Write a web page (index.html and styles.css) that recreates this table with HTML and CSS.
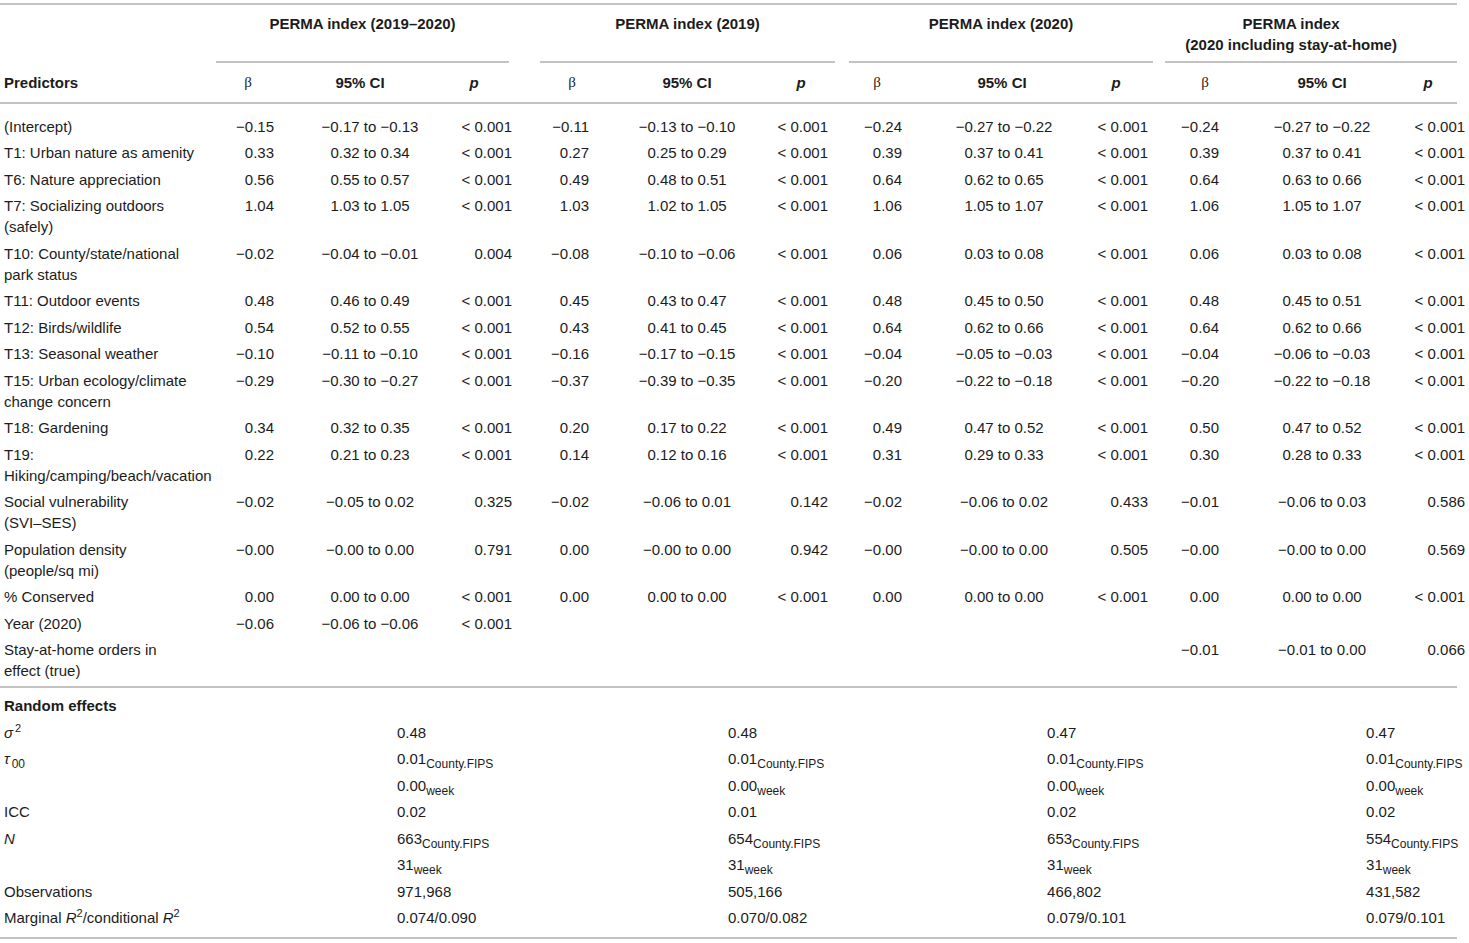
FILE: index.html
```html
<!DOCTYPE html>
<html lang="en">
<head>
<meta charset="utf-8">
<title>PERMA index models</title>
<link rel="stylesheet" href="styles.css">
</head>
<body>
<table class="tbl">
  <colgroup>
    <col class="w-pred">
    <col class="w-b1"><col class="w-c1"><col class="w-p1">
    <col class="w-b2"><col class="w-c2"><col class="w-p2">
    <col class="w-b3"><col class="w-c3"><col class="w-p3">
    <col class="w-b4"><col class="w-c4"><col class="w-p4">
  </colgroup>
  <thead>
    <tr class="r-group">
      <th class="pred"></th>
      <th colspan="3" class="grp"><div class="grp-in g1">PERMA index (2019–2020)</div></th>
      <th colspan="3" class="grp"><div class="grp-in g2">PERMA index (2019)</div></th>
      <th colspan="3" class="grp"><div class="grp-in g3">PERMA index (2020)</div></th>
      <th colspan="3" class="grp"><div class="grp-in g4">PERMA index<br>(2020 including stay-at-home)</div></th>
    </tr>
    <tr class="r-sub">
      <th class="pred">Predictors</th>
      <th class="hb hb1">β</th><th class="hc hc1">95% CI</th><th class="hp hp1">p</th>
      <th class="hb hb2">β</th><th class="hc">95% CI</th><th class="hp">p</th>
      <th class="hb hb3">β</th><th class="hc hc3">95% CI</th><th class="hp hp3">p</th>
      <th class="hb hb4">β</th><th class="hc">95% CI</th><th class="hp hp4">p</th>
    </tr>
  </thead>
  <tbody class="fixed">
    <tr class="first">
      <td class="pred">(Intercept)</td>
      <td class="b">−0.15</td><td class="ci">−0.17 to −0.13</td><td class="p">&lt; 0.001</td>
      <td class="b">−0.11</td><td class="ci">−0.13 to −0.10</td><td class="p">&lt; 0.001</td>
      <td class="b">−0.24</td><td class="ci">−0.27 to −0.22</td><td class="p">&lt; 0.001</td>
      <td class="b">−0.24</td><td class="ci">−0.27 to −0.22</td><td class="p"><span class="ov">&lt; 0.001</span></td>
    </tr>
    <tr>
      <td class="pred">T1: Urban nature as amenity</td>
      <td class="b">0.33</td><td class="ci">0.32 to 0.34</td><td class="p">&lt; 0.001</td>
      <td class="b">0.27</td><td class="ci">0.25 to 0.29</td><td class="p">&lt; 0.001</td>
      <td class="b">0.39</td><td class="ci">0.37 to 0.41</td><td class="p">&lt; 0.001</td>
      <td class="b">0.39</td><td class="ci">0.37 to 0.41</td><td class="p"><span class="ov">&lt; 0.001</span></td>
    </tr>
    <tr>
      <td class="pred">T6: Nature appreciation</td>
      <td class="b">0.56</td><td class="ci">0.55 to 0.57</td><td class="p">&lt; 0.001</td>
      <td class="b">0.49</td><td class="ci">0.48 to 0.51</td><td class="p">&lt; 0.001</td>
      <td class="b">0.64</td><td class="ci">0.62 to 0.65</td><td class="p">&lt; 0.001</td>
      <td class="b">0.64</td><td class="ci">0.63 to 0.66</td><td class="p"><span class="ov">&lt; 0.001</span></td>
    </tr>
    <tr>
      <td class="pred">T7: Socializing outdoors<br>(safely)</td>
      <td class="b">1.04</td><td class="ci">1.03 to 1.05</td><td class="p">&lt; 0.001</td>
      <td class="b">1.03</td><td class="ci">1.02 to 1.05</td><td class="p">&lt; 0.001</td>
      <td class="b">1.06</td><td class="ci">1.05 to 1.07</td><td class="p">&lt; 0.001</td>
      <td class="b">1.06</td><td class="ci">1.05 to 1.07</td><td class="p"><span class="ov">&lt; 0.001</span></td>
    </tr>
    <tr>
      <td class="pred">T10: County/state/national<br>park status</td>
      <td class="b">−0.02</td><td class="ci">−0.04 to −0.01</td><td class="p">0.004</td>
      <td class="b">−0.08</td><td class="ci">−0.10 to −0.06</td><td class="p">&lt; 0.001</td>
      <td class="b">0.06</td><td class="ci">0.03 to 0.08</td><td class="p">&lt; 0.001</td>
      <td class="b">0.06</td><td class="ci">0.03 to 0.08</td><td class="p"><span class="ov">&lt; 0.001</span></td>
    </tr>
    <tr>
      <td class="pred">T11: Outdoor events</td>
      <td class="b">0.48</td><td class="ci">0.46 to 0.49</td><td class="p">&lt; 0.001</td>
      <td class="b">0.45</td><td class="ci">0.43 to 0.47</td><td class="p">&lt; 0.001</td>
      <td class="b">0.48</td><td class="ci">0.45 to 0.50</td><td class="p">&lt; 0.001</td>
      <td class="b">0.48</td><td class="ci">0.45 to 0.51</td><td class="p"><span class="ov">&lt; 0.001</span></td>
    </tr>
    <tr>
      <td class="pred">T12: Birds/wildlife</td>
      <td class="b">0.54</td><td class="ci">0.52 to 0.55</td><td class="p">&lt; 0.001</td>
      <td class="b">0.43</td><td class="ci">0.41 to 0.45</td><td class="p">&lt; 0.001</td>
      <td class="b">0.64</td><td class="ci">0.62 to 0.66</td><td class="p">&lt; 0.001</td>
      <td class="b">0.64</td><td class="ci">0.62 to 0.66</td><td class="p"><span class="ov">&lt; 0.001</span></td>
    </tr>
    <tr>
      <td class="pred">T13: Seasonal weather</td>
      <td class="b">−0.10</td><td class="ci">−0.11 to −0.10</td><td class="p">&lt; 0.001</td>
      <td class="b">−0.16</td><td class="ci">−0.17 to −0.15</td><td class="p">&lt; 0.001</td>
      <td class="b">−0.04</td><td class="ci">−0.05 to −0.03</td><td class="p">&lt; 0.001</td>
      <td class="b">−0.04</td><td class="ci">−0.06 to −0.03</td><td class="p"><span class="ov">&lt; 0.001</span></td>
    </tr>
    <tr>
      <td class="pred">T15: Urban ecology/climate<br>change concern</td>
      <td class="b">−0.29</td><td class="ci">−0.30 to −0.27</td><td class="p">&lt; 0.001</td>
      <td class="b">−0.37</td><td class="ci">−0.39 to −0.35</td><td class="p">&lt; 0.001</td>
      <td class="b">−0.20</td><td class="ci">−0.22 to −0.18</td><td class="p">&lt; 0.001</td>
      <td class="b">−0.20</td><td class="ci">−0.22 to −0.18</td><td class="p"><span class="ov">&lt; 0.001</span></td>
    </tr>
    <tr>
      <td class="pred">T18: Gardening</td>
      <td class="b">0.34</td><td class="ci">0.32 to 0.35</td><td class="p">&lt; 0.001</td>
      <td class="b">0.20</td><td class="ci">0.17 to 0.22</td><td class="p">&lt; 0.001</td>
      <td class="b">0.49</td><td class="ci">0.47 to 0.52</td><td class="p">&lt; 0.001</td>
      <td class="b">0.50</td><td class="ci">0.47 to 0.52</td><td class="p"><span class="ov">&lt; 0.001</span></td>
    </tr>
    <tr>
      <td class="pred">T19:<br>Hiking/camping/beach/vacation</td>
      <td class="b">0.22</td><td class="ci">0.21 to 0.23</td><td class="p">&lt; 0.001</td>
      <td class="b">0.14</td><td class="ci">0.12 to 0.16</td><td class="p">&lt; 0.001</td>
      <td class="b">0.31</td><td class="ci">0.29 to 0.33</td><td class="p">&lt; 0.001</td>
      <td class="b">0.30</td><td class="ci">0.28 to 0.33</td><td class="p"><span class="ov">&lt; 0.001</span></td>
    </tr>
    <tr>
      <td class="pred">Social vulnerability<br>(SVI–SES)</td>
      <td class="b">−0.02</td><td class="ci">−0.05 to 0.02</td><td class="p">0.325</td>
      <td class="b">−0.02</td><td class="ci">−0.06 to 0.01</td><td class="p">0.142</td>
      <td class="b">−0.02</td><td class="ci">−0.06 to 0.02</td><td class="p">0.433</td>
      <td class="b">−0.01</td><td class="ci">−0.06 to 0.03</td><td class="p"><span class="ov">0.586</span></td>
    </tr>
    <tr>
      <td class="pred">Population density<br>(people/sq mi)</td>
      <td class="b">−0.00</td><td class="ci">−0.00 to 0.00</td><td class="p">0.791</td>
      <td class="b">0.00</td><td class="ci">−0.00 to 0.00</td><td class="p">0.942</td>
      <td class="b">−0.00</td><td class="ci">−0.00 to 0.00</td><td class="p">0.505</td>
      <td class="b">−0.00</td><td class="ci">−0.00 to 0.00</td><td class="p"><span class="ov">0.569</span></td>
    </tr>
    <tr>
      <td class="pred">% Conserved</td>
      <td class="b">0.00</td><td class="ci">0.00 to 0.00</td><td class="p">&lt; 0.001</td>
      <td class="b">0.00</td><td class="ci">0.00 to 0.00</td><td class="p">&lt; 0.001</td>
      <td class="b">0.00</td><td class="ci">0.00 to 0.00</td><td class="p">&lt; 0.001</td>
      <td class="b">0.00</td><td class="ci">0.00 to 0.00</td><td class="p"><span class="ov">&lt; 0.001</span></td>
    </tr>
    <tr>
      <td class="pred">Year (2020)</td>
      <td class="b">−0.06</td><td class="ci">−0.06 to −0.06</td><td class="p">&lt; 0.001</td>
      <td class="b"></td><td class="ci"></td><td class="p"></td>
      <td class="b"></td><td class="ci"></td><td class="p"></td>
      <td class="b"></td><td class="ci"></td><td class="p"></td>
    </tr>
    <tr class="last">
      <td class="pred">Stay-at-home orders in<br>effect (true)</td>
      <td class="b"></td><td class="ci"></td><td class="p"></td>
      <td class="b"></td><td class="ci"></td><td class="p"></td>
      <td class="b"></td><td class="ci"></td><td class="p"></td>
      <td class="b">−0.01</td><td class="ci">−0.01 to 0.00</td><td class="p"><span class="ov">0.066</span></td>
    </tr>
  </tbody>
  <tbody class="random">
    <tr class="first">
      <td class="pred strong">Random effects</td>
      <td colspan="3"></td><td colspan="3"></td><td colspan="3"></td><td colspan="3"></td>
    </tr>
    <tr>
      <td class="pred"><i class="gr">σ</i><span class="sup sp">2</span></td>
      <td colspan="3" class="rv re1">0.48</td>
      <td colspan="3" class="rv re2">0.48</td>
      <td colspan="3" class="rv re3">0.47</td>
      <td colspan="3" class="rv re4">0.47</td>
    </tr>
    <tr>
      <td class="pred"><i class="gr">τ</i><span class="sub sp">00</span></td>
      <td colspan="3" class="rv re1">0.01<span class="sub">County.FIPS</span></td>
      <td colspan="3" class="rv re2">0.01<span class="sub">County.FIPS</span></td>
      <td colspan="3" class="rv re3">0.01<span class="sub">County.FIPS</span></td>
      <td colspan="3" class="rv re4">0.01<span class="sub">County.FIPS</span></td>
    </tr>
    <tr>
      <td class="pred"></td>
      <td colspan="3" class="rv re1">0.00<span class="sub">week</span></td>
      <td colspan="3" class="rv re2">0.00<span class="sub">week</span></td>
      <td colspan="3" class="rv re3">0.00<span class="sub">week</span></td>
      <td colspan="3" class="rv re4">0.00<span class="sub">week</span></td>
    </tr>
    <tr>
      <td class="pred">ICC</td>
      <td colspan="3" class="rv re1">0.02</td>
      <td colspan="3" class="rv re2">0.01</td>
      <td colspan="3" class="rv re3">0.02</td>
      <td colspan="3" class="rv re4">0.02</td>
    </tr>
    <tr>
      <td class="pred"><i>N</i></td>
      <td colspan="3" class="rv re1">663<span class="sub">County.FIPS</span></td>
      <td colspan="3" class="rv re2">654<span class="sub">County.FIPS</span></td>
      <td colspan="3" class="rv re3">653<span class="sub">County.FIPS</span></td>
      <td colspan="3" class="rv re4">554<span class="sub">County.FIPS</span></td>
    </tr>
    <tr>
      <td class="pred"></td>
      <td colspan="3" class="rv re1">31<span class="sub">week</span></td>
      <td colspan="3" class="rv re2">31<span class="sub">week</span></td>
      <td colspan="3" class="rv re3">31<span class="sub">week</span></td>
      <td colspan="3" class="rv re4">31<span class="sub">week</span></td>
    </tr>
    <tr>
      <td class="pred">Observations</td>
      <td colspan="3" class="rv re1">971,968</td>
      <td colspan="3" class="rv re2">505,166</td>
      <td colspan="3" class="rv re3">466,802</td>
      <td colspan="3" class="rv re4">431,582</td>
    </tr>
    <tr class="last">
      <td class="pred">Marginal <i>R</i><span class="sup">2</span>/conditional <i>R</i><span class="sup">2</span></td>
      <td colspan="3" class="rv re1">0.074/0.090</td>
      <td colspan="3" class="rv re2">0.070/0.082</td>
      <td colspan="3" class="rv re3">0.079/0.101</td>
      <td colspan="3" class="rv re4">0.079/0.101</td>
    </tr>
  </tbody>
</table>
</body>
</html>
```

FILE: styles.css
```css
html, body {
  margin: 0;
  padding: 0;
  background: #ffffff;
}

body {
  font-family: "Liberation Sans", Arial, Helvetica, sans-serif;
  font-size: 15px;
  line-height: 21px;
  color: #1c1c1c;
}

.tbl {
  table-layout: fixed;
  width: 1457px;
  border-collapse: separate;
  border-spacing: 0;
  margin-top: 3px;
}

.w-pred { width: 216px; }
.w-b1 { width: 69px; }
.w-c1 { width: 170px; }
.w-p1 { width: 57px; }
.w-b2 { width: 88px; }
.w-c2 { width: 174px; }
.w-p2 { width: 54px; }
.w-b3 { width: 85px; }
.w-c3 { width: 182px; }
.w-p3 { width: 53px; }
.w-b4 { width: 82px; }
.w-c4 { width: 184px; }
.w-p4 { width: 43px; }

.tbl th,
.tbl td {
  padding: 2.75px 0;
  vertical-align: top;
  font-weight: normal;
  text-align: left;
  white-space: nowrap;
}

/* header: group row */
.r-group th {
  border-top: 2px solid #c3c3c3;
  padding: 7.5px 0 0;
}

.grp-in {
  height: 42px;
  padding-bottom: 6.5px;
  border-bottom: 2px solid #c3c3c3;
  text-align: center;
  font-weight: bold;
}

.g1 { margin-right: 3px; }
.g2 { margin-left: 28px; margin-right: -7px; }
.g3 { margin-left: 21px; margin-right: -5px; }
.g4 { margin-left: 17px; padding-right: 40px; }

/* header: sub row */
.r-sub th {
  padding: 9px 0;
  border-bottom: 2px solid #c3c3c3;
  font-weight: bold;
  text-align: center;
}

.r-sub th.pred {
  text-align: left;
  padding-left: 4px;
}

.hb {
  font-family: "Liberation Serif", "Times New Roman", serif;
}
.r-sub th.hb { font-weight: normal; }

.hp { font-style: italic; }

.hb1 { padding-right: 5px !important; }
.hc1 { padding-right: 20px !important; }
.hp1 { padding-right: 19px !important; }
.hb2 { padding-left: 32px !important; }
.hb3 { padding-left: 13px !important; }
.hc3 { padding-right: 4px !important; }
.hp3 { padding-right: 11px !important; }
.hb4 { padding-left: 32px !important; }
.hp4 { padding-right: 15px !important; }

/* body cells */
.tbl td.pred {
  padding-left: 4px;
}

.tbl td.b {
  text-align: right;
  padding-right: 11px;
}

.tbl td.ci {
  text-align: center;
}

.tbl td.p {
  text-align: right;
}

.ov {
  display: inline-block;
  margin-right: -8px;
}

.fixed tr.first td { padding-top: 11.5px; }
.fixed tr.last td {
  padding-bottom: 4.5px;
  border-bottom: 2px solid #c3c3c3;
}

.random tr.first td { padding-top: 7.5px; }
.random tr.last td {
  padding-bottom: 8.5px;
  border-bottom: 2px solid #c3c3c3;
}

.tbl td.strong { font-weight: bold; }

.re1 { padding-left: 181px !important; }
.re2 { padding-left: 216px !important; }
.re3 { padding-left: 219px !important; }
.re4 { padding-left: 218px !important; }

.sub {
  font-size: 12px;
  line-height: 0;
  vertical-align: -4px;
}

.sup {
  font-size: 11px;
  line-height: 0;
  vertical-align: 6px;
}

.sp { margin-left: 2px; }

.gr { font-style: italic; }
```
